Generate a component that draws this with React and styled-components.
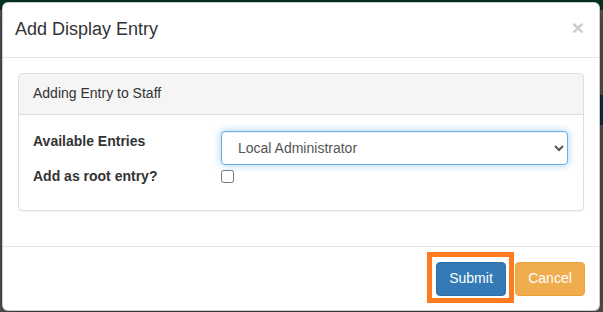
import React from "react";
import styled, { createGlobalStyle } from "styled-components";

const Global = createGlobalStyle`
  html, body { margin: 0; padding: 0; }
  body {
    width: 603px;
    height: 312px;
    overflow: hidden;
    font-family: "Liberation Sans", Arial, Helvetica, sans-serif;
    font-size: 14px;
    line-height: 1.42857;
    color: #333;
    background:
      linear-gradient(#0d2f47, #0d2f47) right 95px / 3px 30px no-repeat,
      linear-gradient(#063322 0 10px, #585858 10px);
  }
  * { box-sizing: border-box; }
`;

const Page = styled.div`
  padding: 2px 2px 0 2px;
`;

const Modal = styled.div`
  width: 598px;
  background: #fff;
  border: 1px solid rgba(0, 0, 0, 0.2);
  border-radius: 6px;
  box-shadow: 0 5px 15px rgba(0, 0, 0, 0.5);
`;

const Header = styled.div`
  display: flex;
  align-items: center;
  justify-content: space-between;
  padding: 14px 15px 14px 12px;
  border-bottom: 1px solid #e5e5e5;
`;

const Title = styled.h4`
  margin: 0;
  font-size: 18px;
  font-weight: 400;
  line-height: 1.42857;
  color: #333;
`;

const Close = styled.button`
  border: 0;
  background: none;
  padding: 0;
  margin-top: -4px;
  font-family: inherit;
  font-size: 21px;
  font-weight: 700;
  line-height: 1;
  color: #000;
  opacity: 0.2;
  cursor: pointer;
`;

const Body = styled.div`
  padding: 15px;
`;

const Panel = styled.div`
  border: 1px solid #ddd;
  border-radius: 4px;
  margin-bottom: 20px;
  box-shadow: 0 1px 1px rgba(0, 0, 0, 0.05);
`;

const PanelHeading = styled.div`
  padding: 10px 15px 10px 14px;
  background: #f5f5f5;
  border-bottom: 1px solid #ddd;
  border-radius: 3px 3px 0 0;
  color: #333;
`;

const PanelBody = styled.div`
  padding: 16px 15px 24px 14px;
  display: grid;
  grid-template-columns: 188px 1fr;
  row-gap: 1px;
`;

const Label = styled.label`
  font-weight: 700;
  line-height: 20px;
  color: #333;
`;

const Select = styled.select`
  width: 100%;
  height: 34px;
  padding: 6px 12px;
  font-family: inherit;
  font-size: 14px;
  color: #555;
  background: #fff;
  border: 1px solid #66afe9;
  border-radius: 4px;
  outline: 0;
  box-shadow: inset 0 1px 1px rgba(0, 0, 0, 0.075), 0 0 8px rgba(102, 175, 233, 0.6);
`;

const CheckCell = styled.div`
  height: 20px;
`;

const Checkbox = styled.input`
  margin: 4px 0 0;
  width: 13px;
  height: 13px;
`;

const Footer = styled.div`
  display: flex;
  justify-content: flex-end;
  align-items: center;
  gap: 9px;
  padding: 15px 14px 14px 15px;
  border-top: 1px solid #e5e5e5;
`;

const Highlight = styled.span`
  position: relative;
  display: inline-flex;
  &::after {
    content: "";
    position: absolute;
    top: -10px;
    left: -9px;
    right: -8px;
    bottom: -7px;
    border: 5px solid #ff7b22;
    pointer-events: none;
  }
`;

const Button = styled.button`
  height: 34px;
  width: 70px;
  padding: 6px 0;
  font-family: inherit;
  font-size: 14px;
  line-height: 1.42857;
  color: #fff;
  border-radius: 4px;
  border: 1px solid ${(p) => (p.$variant === "primary" ? "#2e6da4" : "#eea236")};
  background: ${(p) => (p.$variant === "primary" ? "#337ab7" : "#f0ad4e")};
  cursor: pointer;
`;

export default function App() {
  return (
    <>
      <Global />
      <Page>
        <Modal>
          <Header>
            <Title>Add Display Entry</Title>
            <Close aria-label="Close">×</Close>
          </Header>
          <Body>
            <Panel>
              <PanelHeading>Adding Entry to Staff</PanelHeading>
              <PanelBody>
                <Label>Available Entries</Label>
                <Select defaultValue="la">
                  <option value="la">Local Administrator</option>
                </Select>
                <Label>Add as root entry?</Label>
                <CheckCell>
                  <Checkbox type="checkbox" />
                </CheckCell>
              </PanelBody>
            </Panel>
          </Body>
          <Footer>
            <Highlight>
              <Button $variant="primary">Submit</Button>
            </Highlight>
            <Button $variant="warning">Cancel</Button>
          </Footer>
        </Modal>
      </Page>
    </>
  );
}
